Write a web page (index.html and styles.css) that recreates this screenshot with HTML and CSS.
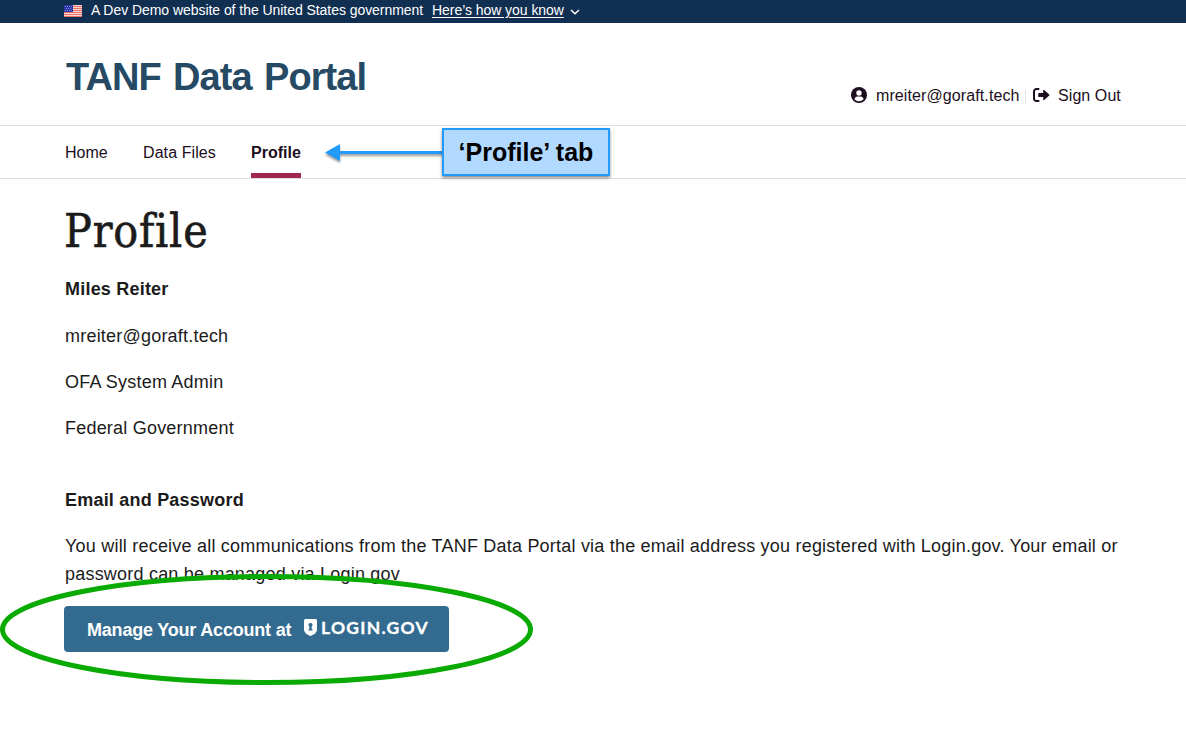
FILE: index.html
```html
<!DOCTYPE html>
<html lang="en">
<head>
<meta charset="utf-8">
<title>TANF Data Portal - Profile</title>
<link rel="stylesheet" href="styles.css">
</head>
<body>
<div class="banner">
  <svg class="flag" width="18" height="12" viewBox="0 0 18 12" shape-rendering="crispEdges"><path fill="#fbd5cf" d="M0 0h18v12H0z"/><path fill="#e87068" d="M0 1h18v1H0zM0 3h18v1H0zM0 5h18v1H0zM0 7h18v1H0zM0 9h18v1H0zM0 11h18v1H0z"/><path fill="#2a38a8" d="M0 0h9v7H0z"/><path fill="#7e88d4" d="M1 1h1v1H1zM3 1h1v1H3zM5 1h1v1H5zM7 1h1v1H7zM2 3h1v1H2zM4 3h1v1H4zM6 3h1v1H6zM1 5h1v1H1zM3 5h1v1H3zM5 5h1v1H5zM7 5h1v1H7z"/></svg>
  <span class="banner-text">A Dev Demo website of the United States government</span>
  <a class="banner-link">Here’s how you know</a>
  <svg class="chevron" width="10" height="6" viewBox="0 0 10 6"><path d="M1 1l4 3.800L9 1" fill="none" stroke="#fff" stroke-width="1.500"/></svg>
</div>
<header class="header">
  <div class="site-title">TANF Data Portal</div>
  <div class="account">
    <svg class="user" width="16" height="16" viewBox="0 0 16 16"><circle cx="8" cy="8" r="8" fill="#1c0d20"/><circle cx="8" cy="6" r="2.700" fill="#fff"/><path d="M3.400 12.300c.4-1.700 1.600-2.700 3-2.700h3.200c1.400 0 2.600 1 3 2.700A6.300 6.300 0 0 1 8 14.200a6.300 6.300 0 0 1-4.600-1.900z" fill="#fff"/></svg>
    <span class="mail">mreiter@goraft.tech</span>
    <span class="divider"></span>
    <svg class="exit" width="17" height="14" viewBox="0 0 17 14"><path d="M6.300 1H3.500A2.500 2.500 0 0 0 1 3.500v7A2.500 2.500 0 0 0 3.500 13h2.800" fill="none" stroke="#1c0d20" stroke-width="2"/><path d="M5.300 5.600q0-.7.700-.7h4.200V2.500q0-1.200 1-.5l5 4.500q.6.500 0 1l-5 4.500q-1 .7-1-.5V9.100H6q-.7 0-.7-.7z" fill="#1c0d20"/></svg>
    <span class="signout">Sign Out</span>
  </div>
</header>
<nav class="nav">
  <a class="tab tab-home">Home</a>
  <a class="tab tab-files">Data Files</a>
  <a class="tab tab-profile">Profile</a>
</nav>
<main class="main">
  <h1>Profile</h1>
  <p class="strong name">Miles Reiter</p>
  <p class="email">mreiter@goraft.tech</p>
  <p class="role">OFA System Admin</p>
  <p class="org">Federal Government</p>
  <p class="strong section">Email and Password</p>
  <p class="copy"><span class="line-one">You will receive all communications from the TANF Data Portal via the email address you registered with Login.gov. Your email or</span><br><span class="line-two">password can be managed via Login.gov</span></p>
  <a class="button"><span class="button-label">Manage Your Account at</span>
    <svg class="shield" width="13" height="17" viewBox="0 0 13 17"><path d="M1.500 0h10Q13 0 13 1.500V10.500c0 3-3 5.200-6.500 6.500C3 15.700 0 13.500 0 10.500V1.500Q0 0 1.500 0z" fill="#fff"/><path d="M6.500 3.900a2 2 0 0 1 1.200 3.600v2.700H8.500v1.300h-4v-1.300h.8V7.500a2 2 0 0 1 1.200-3.600z" fill="#336a90"/></svg>
    <span class="brand">LOGIN.GOV</span></a>
</main>
<svg class="arrow" width="125" height="30" viewBox="0 0 125 30"><path d="M1 14.500L16 6v7h103v3H16v7z" fill="#229bfa"/></svg>
<div class="callout">‘Profile’ tab</div>
<svg class="ellipse" width="534" height="120" viewBox="0 0 534 120"><ellipse cx="266.500" cy="59.500" rx="264" ry="53" fill="none" stroke="#09aa02" stroke-width="5"/></svg>
</body>
</html>
```
FILE: styles.css
```css
* { box-sizing: border-box; }
body { margin: 0; background: #fff; color: #1b1b1b; font-family: "Liberation Sans", Arial, sans-serif; width: 1186px; height: 756px; overflow: hidden; position: relative; }
svg { display: block; flex: none; }
p, h1 { margin: 0; }
span, a, .site-title, p { white-space: nowrap; }
.banner { height: 23px; background: #112f51; color: #fff; display: flex; align-items: flex-start; padding-left: 64px; font-size: 14px; line-height: 20px; }
.flag { margin-top: 5px; }
.banner-text { margin-left: 9px; width: 341px; letter-spacing: -.05px; }
.banner-link { width: 132px; text-decoration: underline; text-underline-offset: 2px; letter-spacing: -.05px; }
.chevron { margin: 9px 0 0 6px; }
.header { height: 103px; border-bottom: 1px solid #dcdee0; display: flex; justify-content: space-between; padding: 0 65px 0 66px; }
.site-title { font-size: 38px; line-height: 44px; margin-top: 32px; font-weight: bold; color: #264a64; letter-spacing: -.9px; word-spacing: 2.500px; }
.account { display: flex; height: 20px; line-height: 21px; margin-top: 62px; font-size: 16px; color: #1c0d20; }
.user { margin-top: 2px; }
.mail { margin-left: 9px; width: 149px; letter-spacing: .1px; }
.divider { width: 1px; height: 14px; margin-top: 5px; background: #dfe1e8; }
.exit { margin: 3px 0 0 7px; }
.signout { margin-left: 8px; width: 63px; letter-spacing: .08px; }
.nav { height: 53px; border-bottom: 1px solid #dcdee0; display: flex; padding-left: 65px; color: #1c0d20; font-size: 16px; line-height: 54px; }
.tab-home { width: 78px; }
.tab-files { width: 108px; letter-spacing: .08px; }
.tab-profile { width: 50px; font-weight: bold; border-bottom: 5px solid #a02551; }
.main { padding-left: 64px; font-size: 18px; line-height: 28px; letter-spacing: .21px; }
.main p { padding-left: 1px; }
h1 { font-family: "DejaVu Serif Condensed", "DejaVu Serif", serif; font-weight: normal; font-size: 46px; line-height: 60px; padding-top: 22px; height: 96px; letter-spacing: .8px; -webkit-text-stroke: .6px #1b1b1b; }
.strong { font-weight: bold; }
.name { height: 47px; }
.email, .role { height: 46px; }
.org { height: 72px; }
.section { height: 46px; }
.button { display: flex; margin-top: 18px; width: 385px; height: 46px; border-radius: 4px; background: #336a90; color: #fff; padding-left: 23px; line-height: 48px; }
.button-label { width: 217px; font-weight: bold; letter-spacing: -.2px; }
.shield { margin-top: 13px; }
.brand { font-family: Lato, sans-serif; font-weight: bold; font-size: 17.500px; line-height: 43px; margin-left: 4px; letter-spacing: 1.250px; -webkit-text-stroke: .3px #fff; }
.arrow { position: absolute; left: 324px; top: 138px; filter: drop-shadow(0 2px 1px rgba(0,0,0,.4)); }
.callout { position: absolute; left: 442px; top: 128px; width: 168px; height: 48px; border: 2px solid #229bfa; background: #b2d9ff; box-shadow: 0 2px 3px rgba(0,0,0,.45); color: #000; font-size: 25px; line-height: 45px; font-weight: bold; text-align: center; white-space: nowrap; }
.ellipse { position: absolute; left: 0; top: 570px; }
```
